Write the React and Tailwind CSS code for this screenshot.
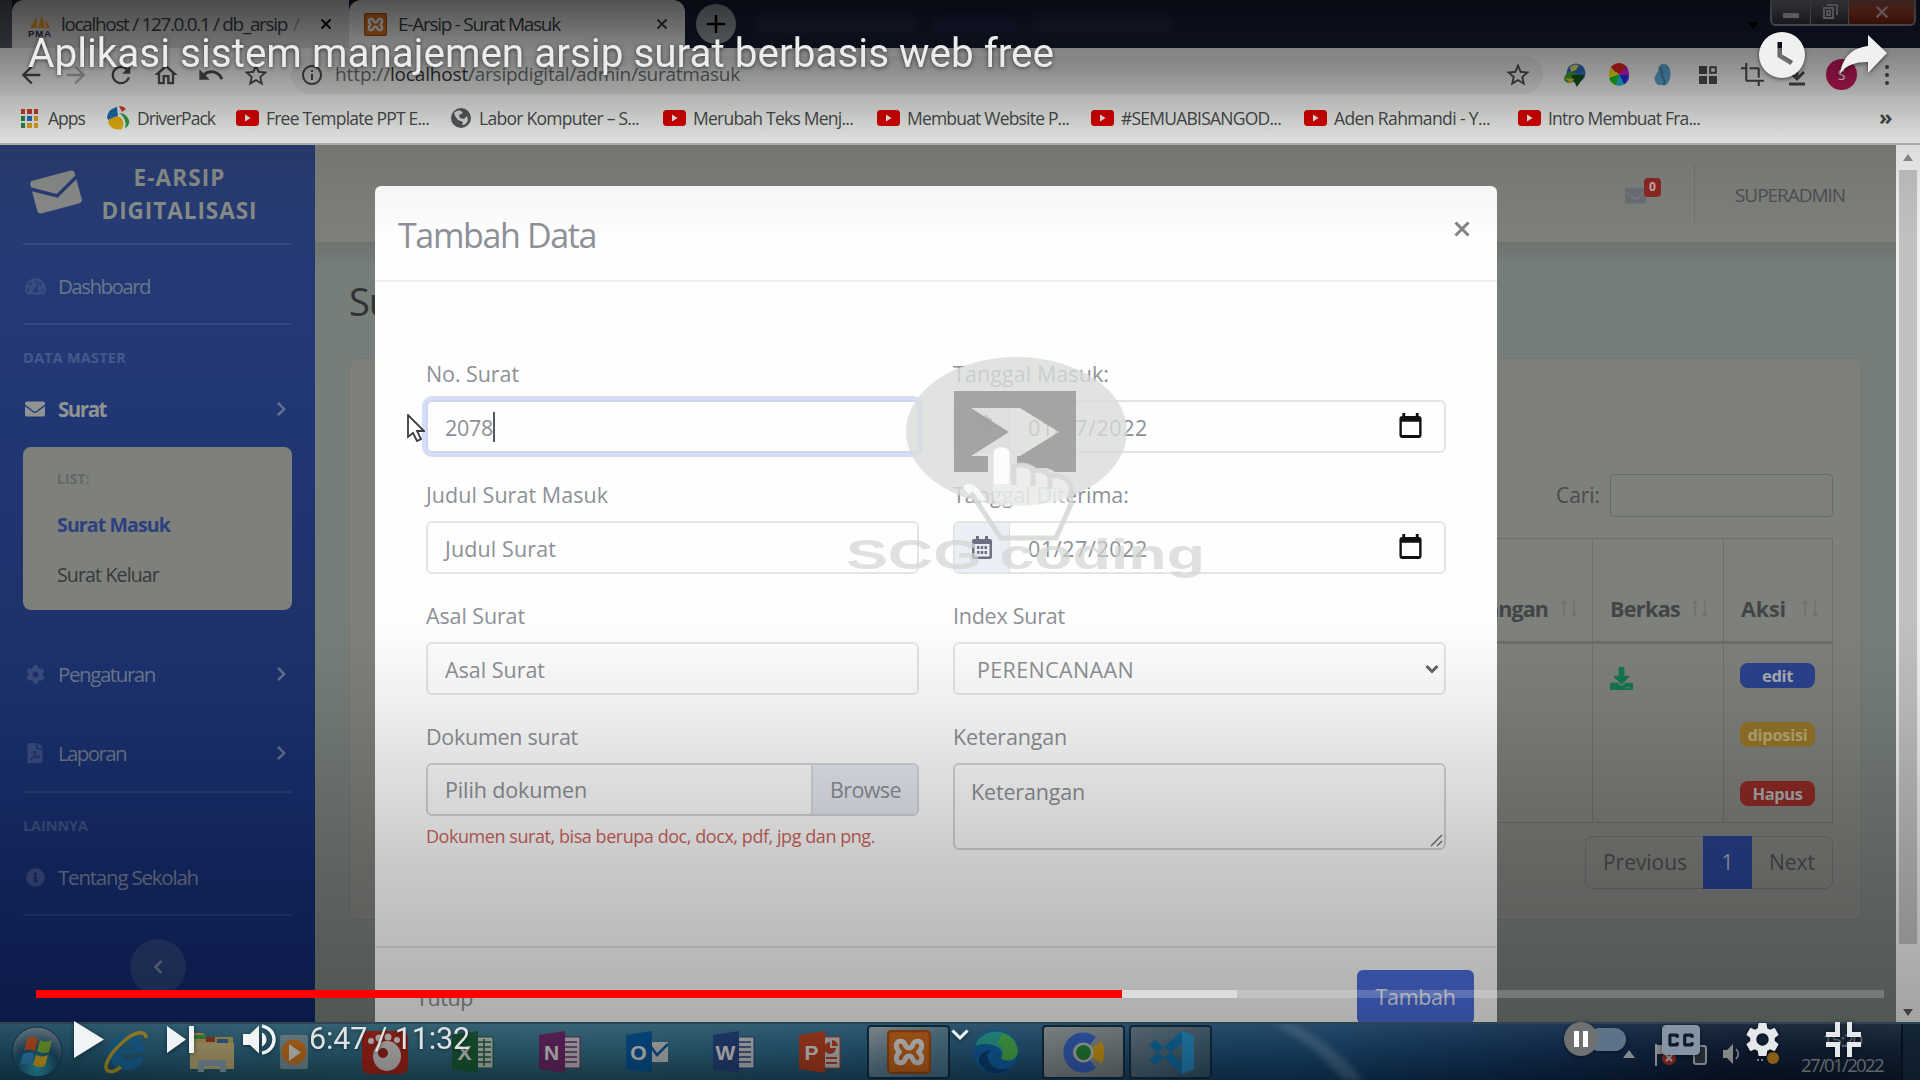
import { useLayoutEffect, useRef } from "react";
import {
  FaTachometerAlt, FaEnvelope, FaCog, FaFilePdf, FaInfoCircle, FaDownload,
  FaChevronRight, FaChevronLeft,
} from "react-icons/fa";
import { MdStarBorder, MdCrop, MdRefresh, MdUndo, MdOutlineHome, MdInfoOutline, MdArrowBack, MdArrowForward, MdSettings } from "react-icons/md";

// Single line of text whose letter spacing is adjusted to fill a given width.
function Fit({ w, className = "", children }) {
  const ref = useRef(null);
  useLayoutEffect(() => {
    const el = ref.current;
    el.style.letterSpacing = "0px";
    const natural = el.getBoundingClientRect().width;
    const n = el.textContent.length;
    el.style.letterSpacing = `${(w - natural) / n}px`;
  }, [w, children]);
  return <span ref={ref} className={`inline-block whitespace-nowrap shrink-0 ${className}`}>{children}</span>;
}

/* ---------- browser ---------- */

function Xampp({ className }) {
  return (
    <svg className={className} viewBox="0 0 24 24" preserveAspectRatio="none">
      <rect width="24" height="24" rx="2.500" fill="#e87722" />
      <rect x=".6" y=".6" width="22.800" height="22.800" rx="2" fill="none" stroke="#b9560f" strokeWidth="1.200" />
      <path d="M8.200 6.200C5 5.500 3.800 9 6.800 12 3.800 15 5 18.500 8.200 17.800c2.200-.5 1.200-3.600 3.800-3.600s1.600 3.100 3.800 3.600c3.200.7 4.400-2.800 1.400-5.800 3-3 1.800-6.500-1.400-5.800-2.200.5-1.200 3.600-3.800 3.600s-1.600-3.100-3.800-3.600z" fill="none" stroke="#fff" strokeWidth="2.700" strokeLinejoin="round" />
    </svg>
  );
}

function Close({ className }) {
  return (
    <svg className={className} viewBox="0 0 12 12"><path d="M1.500 1.500l9 9M10.500 1.500l-9 9" stroke="currentColor" strokeWidth="2" /></svg>
  );
}

function TabStrip() {
  return (
    <div className="flex h-12 bg-[#171f38] text-[#3c3f42] relative">
      <div className="w-3 bg-[#525762]" />
      <div className="w-[337px] bg-[#d6d8d6] rounded-tl-xl flex items-center pl-4">
        <svg className="w-6 h-6 mt-1" viewBox="0 0 24 24">
          <path d="M2 14L9 3v11zM10 14L14 1l3 13zM17 5l5 9h-4z" fill="#f59b23" />
          <text x="0" y="23" fontSize="9.500" fontWeight="bold" fontFamily="Liberation Sans" fill="#2c2c54" textLength="23">PMA</text>
        </svg>
        <div className="w-[236px] ml-[9px] text-[19px] flex"><Fit w={226}>localhost / 127.0.0.1 / db_arsip</Fit><span className="opacity-40 ml-1.5">/</span></div>
        <Close className="w-3 h-3 ml-[23px] text-black" />
      </div>
      <div className="w-[336px] bg-[#f0f2f0] rounded-t-xl flex items-center pl-[15px]">
        <Xampp className="w-[23px] h-[23px]" />
        <div className="ml-[11px] w-[258px] text-[19px]"><Fit w={162}>E-Arsip - Surat Masuk</Fit></div>
        <Close className="w-3 h-3 ml-0" />
      </div>
      <div className="w-10 h-10 mt-1 ml-[11px] rounded-full bg-[#9ba1a6] flex items-center justify-center text-black">
        <svg className="w-[18px] h-[18px]" viewBox="0 0 18 18"><path d="M9 0v18M0 9h18" stroke="currentColor" strokeWidth="2.500" /></svg>
      </div>
      <div className="flex gap-4 ml-5 mt-4 blur-[5px]">
        <div className="w-[160px] h-4 bg-[#262b4a]" /><div className="w-[84px] h-4 bg-[#22284a]" /><div className="w-[140px] h-4 bg-[#262b4a]" />
      </div>
      <svg className="absolute left-[1747px] top-[22px] w-3 h-2" viewBox="0 0 12 8"><path d="M0 0h12L6 7z" fill="#000" /></svg>
      <div className="absolute right-[4px] top-0 h-[26px] w-[146px] flex rounded-b-md border-2 border-t-0 border-[#9a9ca8] overflow-hidden">
        <div className="w-[39px] bg-gradient-to-b from-[#8a8d98] via-[#5d606c] to-[#30343f] flex items-center justify-center border-r border-[#9a9ca8]"><div className="w-4 h-[5px] mt-1.5 bg-[#dcdcdc]" /></div>
        <div className="w-[38px] bg-gradient-to-b from-[#8a8d98] via-[#5d606c] to-[#30343f] flex items-center justify-center border-r border-[#9a9ca8]">
          <svg className="w-4 h-4" viewBox="0 0 16 16"><path d="M5 1h10v10M2 4h9v10H2zM5 7h3v4H5z" fill="none" stroke="#dcdcdc" strokeWidth="1.800" /></svg>
        </div>
        <div className="flex-1 bg-gradient-to-b from-[#a8685c] via-[#b8432c] to-[#7c2012] flex items-center justify-center"><Close className="w-3.5 h-3.5 text-[#f0dcd8]" /></div>
      </div>
    </div>
  );
}

function Toolbar() {
  return (
    <div className="flex items-center h-[47px] pt-1.5 bg-[#f0f1ef] text-[#4a4c4e]">
      <MdArrowBack className="w-7 h-7 ml-[17px]" />
      <MdArrowForward className="w-7 h-7 ml-[17px] opacity-40" />
      <MdRefresh className="w-7 h-7 ml-[17px]" />
      <MdOutlineHome className="w-7 h-7 ml-[17px]" />
      <MdUndo className="w-7 h-7 ml-[17px]" />
      <MdStarBorder className="w-7 h-7 ml-[17px]" />
      <div className="ml-[21px] w-[1252px] h-[38px] rounded-full bg-[#e4e6e3] flex items-center pl-[9px]">
        <MdInfoOutline className="w-6 h-6 shrink-0" />
        <div className="ml-[11px] text-[19px] text-[#676a6d] w-[1169px] shrink-0 flex"><Fit w={55}>http://</Fit><Fit w={78} className="text-[#333]">localhost</Fit><Fit w={272}>/arsipdigital/admin/suratmasuk</Fit></div>
        <MdStarBorder className="w-7 h-7 shrink-0" />
      </div>
      <svg className="w-6 h-6 ml-5" viewBox="0 0 24 24"><circle cx="13" cy="10" r="9.500" fill="#2f6bb5" /><path d="M7 4c3-3 7-3 9-2l-3 5-5 2z" fill="#d9d36a" /><path d="M1 15c2-6 7-8 12-4l-5 9c-4 0-7-1-7-5z" fill="#3e9a35" /><path d="M8 12h14l-8 12z" fill="#164f17" /><path d="M2 15l6 6 3-5z" fill="#d8b92c" /></svg>
      <div className="w-5 h-[23px] ml-[22px] rounded-full bg-[conic-gradient(#e02020_0_12%,#c020d0_12%_27%,#2030e0_27%_42%,#20c0d0_42%_55%,#20c020_55%_70%,#e8e020_70%_86%,#e02020_86%)]" />
      <svg className="w-[22px] h-6 ml-[23px]" viewBox="0 0 24 24"><path d="M12 0c7-1 9 8 8 14s-4 11-9 9c-6 1-9-4-8-9 1-3 4-5 4-8s2-6 5-6z" fill="#5aa3cf" /><path d="M9 4c3 3 1 8 3 11s3 5 0 7" stroke="#3b78a8" strokeWidth="2" fill="none" /></svg>
      <svg className="w-[18px] h-[18px] ml-[25px]" viewBox="0 0 18 18"><path d="M0 0h8v8H0zM0 10h8v8H0zM10 10h8v8h-8z" fill="currentColor" /><path d="M11.200 1.200h5.600v5.600h-5.600z" fill="none" stroke="currentColor" strokeWidth="2" /></svg>
      <MdCrop className="w-[25px] h-[25px] ml-[23px]" />
      <svg className="w-5 h-6 ml-[22px]" viewBox="0 0 20 24"><path d="M10 0v14M3 9l7 7 7-7M2 21h16" fill="none" stroke="currentColor" strokeWidth="2.800" /></svg>
      <div className="w-[31px] h-[31px] ml-[19px] rounded-full bg-[#c2185b] text-white text-sm flex items-center justify-center">S</div>
      <div className="ml-[28px] flex flex-col gap-[4px]"><i className="w-1 h-1 bg-[#4a4c4e] rounded-full" /><i className="w-1 h-1 bg-[#4a4c4e] rounded-full" /><i className="w-1 h-1 bg-[#4a4c4e] rounded-full" /></div>
    </div>
  );
}

function YtIcon() {
  return <svg className="w-[23px] h-4 shrink-0" viewBox="0 0 23 16"><rect width="23" height="16" rx="3.500" fill="#e60000" /><path d="M9 4.500v7l5.500-3.500z" fill="#fff" /></svg>;
}

const videoMarks = [
  ["Merubah Teks Menj...", 160, "w-[214px]"],
  ["Membuat Website P...", 162, "w-[214px]"],
  ["#SEMUABISANGOD...", 160, "w-[213px]"],
  ["Aden Rahmandi - Y...", 156, "w-[214px]"],
  ["Intro Membuat Fra...", 152, "w-[214px]"],
];

function Bookmarks() {
  const dots = ["bg-[#d23b30]", "bg-[#d23b30]", "bg-[#d23b30]", "bg-[#2d8a4a]", "bg-[#2b70c9]", "bg-[#e4a620]", "bg-[#2d8a4a]", "bg-[#e4a620]", "bg-[#e4a620]"];
  return (
    <div className="flex items-center h-[50px] pb-[2px] bg-[#f4f6f3] text-[17.5px] text-[#4c4e50] border-b-2 border-[#b8bab7]">
      <div className="w-[85px] pl-[21px] flex items-center">
        <div className="grid grid-cols-3 gap-[2px] w-[19px]">{dots.map((d, i) => <i key={i} className={`h-[5px] ${d}`} />)}</div>
        <div className="ml-[10px]"><Fit w={37}>Apps</Fit></div>
      </div>
      <div className="w-[130px] pl-[21px] flex items-center">
        <svg className="w-[24px] h-[24px]" viewBox="0 0 24 24"><path d="M1 11C2 5 6 2 11 1l1 9-10 4z" fill="#1b6fb5" /><path d="M13 0c3 0 5 1 7 3l-4 3z" fill="#d83b2e" /><path d="M13 7c5 0 8 3 10 7 1 4-2 8-4 8 2-6-1-12-6-15z" fill="#34a14b" /><path d="M2 15c4-4 10-6 13-3s3 7 1 11C10 25 3 22 2 15z" fill="#eab511" /></svg>
        <div className="ml-[7px]"><Fit w={78}>DriverPack</Fit></div>
      </div>
      <div className="w-[215px] pl-[21px] flex items-center"><YtIcon /><div className="ml-[7px]"><Fit w={163}>Free Template PPT E...</Fit></div></div>
      <div className="w-[212px] pl-[21px] flex items-center">
        <svg className="w-5 h-5" viewBox="0 0 20 20"><circle cx="10" cy="10" r="10" fill="#5a5d60" /><path d="M3 5c2-2 4-3 7-2l2 2-4 2 1 3 4 1 3-3 1 4c-1 3-3 5-6 5l1-3-5-2-3-4z" fill="#e8e8e6" /></svg>
        <div className="ml-2"><Fit w={160}>Labor Komputer – S...</Fit></div>
      </div>
      {videoMarks.map(([t, w, c]) => (
        <div key={t} className={`${c} pl-[21px] flex items-center`}><YtIcon /><div className="ml-[7px]"><Fit w={w}>{t}</Fit></div></div>
      ))}
      <div className="ml-[168px] text-[22px] font-bold pb-1">»</div>
    </div>
  );
}

/* ---------- application page ---------- */

function Divider({ className }) {
  return <div className={`h-0.5 mx-[23px] bg-white/[0.07] ${className}`} />;
}

function NavItem({ icon, label, w, arrow, strong, className }) {
  return (
    <div className={`flex items-center h-8 pl-6 text-[20.5px] ${strong ? "text-[#8f9492] font-bold" : "text-[#6c768d]"} ${className}`}>
      <div className={`w-[22px] flex justify-center ${strong ? "" : "text-[#3a4b80]"}`}>{icon}</div>
      <div className="ml-[12px] w-[218px]"><Fit w={w}>{label}</Fit></div>
      {arrow && <FaChevronRight className="w-[11px] h-4 text-[#63708f]" />}
    </div>
  );
}

function Sidebar() {
  return (
    <aside className="w-[315px] shrink-0 h-full overflow-hidden bg-[linear-gradient(#2a3d72_0,#263b74_80px,#213775_260px,#1e336c_460px,#192f70_650px,#102568_880px)]">
      <div className="flex h-[98px] pt-[16px] pl-[30px]">
        <svg className="w-[52px] h-[46px] mt-2" viewBox="0 0 52 46" fill="#868986">
          <g transform="rotate(-15 26 23)"><path d="M3 10a4 4 0 0 1 4-4h38a4 4 0 0 1 4 4v2L26 25 3 12z" /><path d="M3 16l23 13 23-13v20a4 4 0 0 1-4 4H7a4 4 0 0 1-4-4z" /></g>
        </svg>
        <div className="ml-[20px] w-[155px] flex flex-col items-center text-[22.5px] leading-[33px] font-bold text-[#888c88]">
          <Fit w={92}>E-ARSIP</Fit><Fit w={156}>DIGITALISASI</Fit>
        </div>
      </div>
      <Divider />
      <NavItem className="mt-[25px]" icon={<FaTachometerAlt size={21} />} label="Dashboard" w={92} />
      <Divider className="mt-[21px]" />
      <div className="mt-[23px] h-5 leading-5 pl-[23px] text-[14.5px] font-bold text-[#46588a]"><Fit w={103}>DATA MASTER</Fit></div>
      <NavItem className="mt-[25px]" icon={<FaEnvelope size={20} />} label="Surat" w={48} strong arrow />
      <div className="mt-[22px] mx-[23px] h-[163px] rounded-lg bg-[#7e807c] pl-[34px] pt-[22px]">
        <div className="h-5 leading-5 text-[13.5px] font-bold text-[#63666a]"><Fit w={33}>LIST:</Fit></div>
        <div className="h-6 leading-6 mt-[24px] text-[19.5px] font-bold text-[#2c3f80]"><Fit w={113}>Surat Masuk</Fit></div>
        <div className="h-6 leading-6 mt-[26px] text-[19.5px] text-[#37393d]"><Fit w={102}>Surat Keluar</Fit></div>
      </div>
      <NavItem className="mt-[48px]" icon={<FaCog size={19} />} label="Pengaturan" w={97} arrow />
      <NavItem className="mt-[47px]" icon={<FaFilePdf size={20} />} label="Laporan" w={68} arrow />
      <Divider className="mt-[22px]" />
      <div className="mt-[23px] h-5 leading-5 pl-[23px] text-[14.5px] font-bold text-[#3e5082]"><Fit w={65}>LAINNYA</Fit></div>
      <NavItem className="mt-[25px]" icon={<FaInfoCircle size={19} />} label="Tentang Sekolah" w={140} />
      <Divider className="mt-[21px]" />
      <div className="mt-[23px] mx-auto w-14 h-14 rounded-full bg-[#273c72] flex items-center justify-center text-[#6f7a92]"><FaChevronLeft className="w-3 h-4" /></div>
    </aside>
  );
}

function SortArrows() {
  return <svg className="w-[18px] h-[17px] mb-2" viewBox="0 0 18 17" fill="none" stroke="#6b6e6d" strokeWidth="1.200"><path d="M4 16V1M1.500 3.500L4 1l2.500 2.500M14 1v15M11.500 13.500L14 16l2.500-2.500" /></svg>;
}

function MainPage() {
  return (
    <main className="flex-1 overflow-hidden bg-[#767e79] flex flex-col">
      <div className="h-[97px] shrink-0 bg-[#7d7f7b] flex items-center justify-end">
        <div className="relative w-[23px] h-[18px] text-[#6b6d76]"><FaEnvelope className="w-[23px] h-[21px]" />
          <div className="absolute -top-[7px] left-[20px] w-[17px] h-[19px] rounded bg-[#8c2722] text-[#c9a9a5] text-[12px] font-bold flex items-center justify-center">0</div>
        </div>
        <div className="ml-[47px] w-px h-[58px] bg-[#6e716f]" />
        <div className="ml-[40px] mr-[51px] text-[19px] text-[#4c4e54] pt-1"><Fit w={110}>SUPERADMIN</Fit></div>
      </div>
      <div className="h-6 shrink-0 bg-gradient-to-b from-[#6d736f] to-[#767e79]" />
      <h1 className="h-[52px] leading-[52px] mt-[9px] pl-[34px] text-[38px] text-[#303234]"><Fit w={208}>Surat Masuk</Fit></h1>
      <section className="mt-[31px] mx-[34px] h-[562px] rounded-lg border border-[#737674] bg-[#7e807c] flex flex-col items-end pr-[28px] text-[21px] text-[#484b4e]">
        <div className="mt-[115px] flex items-center"><Fit w={44}>Cari:</Fit><div className="ml-[10px] w-[223px] h-[43px] rounded border border-[#686b6b]" /></div>
        <div className="mt-[21px] w-[1420px] h-[285px] border border-[#6b6e6d] grid grid-cols-[1179px_131px_1fr] grid-rows-[105px_1fr] [&>*]:border-[#6b6e6d] font-bold text-[#424548] text-[21.5px]">
          <div className="border-r border-b-[3px] flex items-end justify-end pb-[16px] pr-[14px]"><Fit w={116}>Keterangan</Fit><span className="ml-[12px]"><SortArrows /></span></div>
          <div className="border-r border-b-[3px] flex items-end pb-[16px] pl-[17px]"><Fit w={70}>Berkas</Fit><span className="ml-[11px]"><SortArrows /></span></div>
          <div className="border-b-[3px] flex items-end pb-[16px] pl-[17px]"><Fit w={45}>Aksi</Fit><span className="ml-[15px]"><SortArrows /></span></div>
          <div className="border-r" />
          <div className="border-r pl-[17px] pt-[23px] text-[#13764e]"><FaDownload size={23} /></div>
          <div className="pl-[16px] pt-[19px] flex flex-col gap-[34px] text-[16.5px] text-[#a9adb0]">
            <div className="w-[75px] h-[25px] leading-[26px] rounded-lg bg-[#2a428d] text-center"><Fit w={31}>edit</Fit></div>
            <div className="w-[75px] h-[25px] leading-[26px] rounded-lg bg-[#957428] text-center text-[#b7a878]"><Fit w={60}>diposisi</Fit></div>
            <div className="w-[75px] h-[25px] leading-[26px] rounded-lg bg-[#8f2a24] text-center"><Fit w={50}>Hapus</Fit></div>
          </div>
        </div>
        <div className="mt-[13px] h-[53px] w-[248px] rounded-lg border border-[#6b6e6d] flex items-center">
          <div className="w-[117px] pl-[17px]"><Fit w={84}>Previous</Fit></div>
          <div className="w-[49px] h-[53px] bg-[#27408d] flex items-center justify-center text-[#9ba3b5]">1</div>
          <div className="flex-1 pl-[17px]"><Fit w={46}>Next</Fit></div>
        </div>
      </section>
    </main>
  );
}

const inputBox = "h-[53px] rounded-md border-2 border-[#e2e5e8] flex items-center text-[21.5px] pl-[17px] pt-[3px]";

function Field({ label, w, children }) {
  return (
    <div className="flex flex-col">
      <div className="h-8 leading-8 mb-[10px] text-[21.5px] text-[#8d9096]"><Fit w={w}>{label}</Fit></div>
      {children}
      <div className="h-[26px]" />
    </div>
  );
}

function DateInput() {
  return (
    <div className="h-[53px] rounded-md border-2 border-[#e2e5e8] flex items-center text-[21.5px] text-[#8d9096] overflow-hidden">
      <div className="w-[55px] h-full bg-[#eceef6] border-r border-[#dcdfe6] flex items-center justify-center">
        <svg className="w-5 h-[23px]" viewBox="0 0 20 23"><path d="M4 0h3v3h6V0h3v3h2a2 2 0 0 1 2 2v16a2 2 0 0 1-2 2H2a2 2 0 0 1-2-2V5a2 2 0 0 1 2-2h2z" fill="#6e7082" /><path d="M2.500 8h15v12.500h-15z" fill="#eceef6" /><path d="M5 11.500h10M5 16.500h10" stroke="#6e7082" strokeWidth="3" strokeDasharray="2.500 1.250" /></svg>
      </div>
      <div className="ml-[18px] w-[371px] pt-[3px]"><Fit w={120}>01/27/2022</Fit></div>
      <svg className="w-[23px] h-[25px] mb-0.5" viewBox="0 0 23 26"><path d="M3 0h3v3h11V0h3v3a3 3 0 0 1 3 3v17a3 3 0 0 1-3 3H3a3 3 0 0 1-3-3V6a3 3 0 0 1 3-3z" fill="#111" /><path d="M2.500 9h18v14h-18z" fill="#fff" /></svg>
    </div>
  );
}

function Modal() {
  return (
    <div className="absolute left-[375px] top-[41px] w-[1122px] h-[900px] rounded-md bg-[#fdfefd] text-[#8d9096]">
      <div className="h-[96px] border-b-2 border-[#eceeef] flex items-center justify-between pl-[23px] pr-[27px]">
        <div className="text-[34px] pt-1"><Fit w={198}>Tambah Data</Fit></div>
        <svg className="w-4 h-4 mb-2" viewBox="0 0 16 16"><path d="M1.500 1.500l13 13M14.500 1.500l-13 13" stroke="#818481" strokeWidth="3" /></svg>
      </div>
      <div className="h-[664px] pt-[76px] pl-[51px] pr-[51px] grid grid-cols-[493px_493px] gap-x-[34px] content-start">
        <Field label="No. Surat" w={93}>
          <div className="h-[53px] rounded-md border-2 border-[#ccd6f4] ring-4 ring-[#d6def7] flex items-center text-[21.5px] pl-[17px]"><span className="pt-[4px]"><Fit w={48}>2078</Fit></span><div className="w-0.5 h-[30px] bg-[#55585c]" /></div>
        </Field>
        <Field label="Tanggal Masuk:" w={156}><DateInput /></Field>
        <Field label="Judul Surat Masuk" w={182}><div className={inputBox}><Fit w={111}>Judul Surat</Fit></div></Field>
        <Field label="Tanggal Diterima:" w={176}><DateInput /></Field>
        <Field label="Asal Surat" w={99}><div className={inputBox}><Fit w={100}>Asal Surat</Fit></div></Field>
        <Field label="Index Surat" w={112}>
          <div className="h-[53px] rounded-md border-2 border-[#e2e5e8] flex items-center justify-between text-[21.5px] pl-[22px] pr-[5px]"><span className="pt-[3px]"><Fit w={157}>PERENCANAAN</Fit></span>
            <svg className="w-3.5 h-3" viewBox="0 0 14 12"><path d="M1.500 3L7 8.500 12.500 3" fill="none" stroke="#606265" strokeWidth="3" /></svg>
          </div>
        </Field>
        <Field label="Dokumen surat" w={152}>
          <div className="h-[53px] rounded-md border-2 border-[#d3d6dd] flex items-center text-[21.5px] pl-[17px] overflow-hidden">
            <div className="w-[366px] pt-0.5"><Fit w={142}>Pilih dokumen</Fit></div>
            <div className="flex-1 h-full bg-[#e8eaf2] border-l-2 border-[#d8dbe3] pl-[17px] pt-0.5 flex items-center"><Fit w={71}>Browse</Fit></div>
          </div>
          <div className="h-7 leading-7 mt-[6px] text-[18px] text-[#cf6560]"><Fit w={449}>Dokumen surat, bisa berupa doc, docx, pdf, jpg dan png.</Fit></div>
        </Field>
        <Field label="Keterangan" w={114}>
          <div className="h-[87px] rounded-md border-2 border-[#d3d6dd] pl-[16px] pt-[11px] text-[21.5px] flex justify-between"><Fit w={114}>Keterangan</Fit>
            <svg className="w-[15px] h-[15px] self-end" viewBox="0 0 15 15"><path d="M2 13L13 2M8 13l5-5" stroke="#777" strokeWidth="1.500" /></svg>
          </div>
        </Field>
      </div>
      <div className="h-24 border-t-2 border-[#e4e6e6] flex justify-between pl-[41px] pr-[23px] pt-[22px] text-[21.5px]">
        <div className="h-[56px] flex items-center"><Fit w={57}>Tutup</Fit></div>
        <div className="w-[117px] h-[54px] rounded-md bg-[#4c6fe0] text-[#e6ebfb] flex items-center justify-center"><Fit w={80}>Tambah</Fit></div>
      </div>
    </div>
  );
}

function Scrollbar() {
  return (
    <div className="w-6 bg-[#eef0ed] flex flex-col items-center">
      <svg className="w-2.5 h-2 mt-[9px]" viewBox="0 0 10 8"><path d="M0 7h10L5 0z" fill="#8a8c89" /></svg>
      <div className="mt-[8px] w-[18px] h-[774px] bg-[#bfc1be]" />
      <svg className="w-2.5 h-2 mt-[64px]" viewBox="0 0 10 8"><path d="M0 1h10L5 8z" fill="#5b5d5b" /></svg>
    </div>
  );
}

/* ---------- watermark ---------- */

function Watermark() {
  return (
    <svg className="absolute left-[840px] top-[350px] w-[380px] h-[240px]" viewBox="840 350 380 240">
      <ellipse cx="1016.500" cy="431.500" rx="110.500" ry="74.500" fill="#dadcda" fillOpacity=".8" />
      <path d="M954 391h122v81h-21c-5-4-12-5-18-3-4-5-12-6-20-5v-8h3l39-24-39-24h-49l38 24-38 24h17v16h-34z" fill="#a0a0a0" fillOpacity=".95" />
      <path d="M993 500V453c0-8 17-8 17 0v31l7-18c8-3 16 0 18 4 8-2 14 0 17 5 10-1 20 3 19 15l-6 17h-66z" fill="#fdfefd" fillOpacity=".4" />
      <path d="M994 484V452c0-6 15-6 15 0v32z" fill="#fdfefd" fillOpacity=".9" />
      <path d="M963 488c2-7 12-4 17 3l6 9-10 2z" fill="#fdfefd" fillOpacity=".8" />
      <path d="M1014 485V466c7-2 19-1 19 7v13M1033 471c8-2 17 1 17 8v10M1050 476c9-1 20 2 21 12v16l-15 34h-55l-30-45" fill="none" stroke="#d5d7d5" strokeWidth="5" strokeOpacity=".85" />
      <text x="846" y="569" fontFamily="Liberation Sans" fontWeight="bold" fontSize="42" fill="#d2d4d2" fillOpacity=".7" textLength="359" lengthAdjust="spacingAndGlyphs">SCG coding</text>
    </svg>
  );
}

/* ---------- taskbar ---------- */

function OfficeIcon({ letter, color, kind, className }) {
  return (
    <svg className={`w-[42px] h-[42px] shrink-0 ${className}`} viewBox="0 0 42 42">
      {kind !== "mail" && <rect x="23" y="6" width="18" height="31" fill="#e2e4e6" stroke={color} />}
      {kind === "grid" && <path d="M26 11h13M26 16h13M26 21h13M26 26h13M26 31h13M32 8v27" stroke={color} strokeWidth="1.500" />}
      {kind === "lines" && <path d="M26 11h12M26 16h12M26 21h12M26 26h12M26 31h12" stroke={color} strokeWidth="1.700" />}
      {kind === "mail" && <><path d="M24 11h18v20H24z" fill="#e2e4e6" /><path d="M25 16l6 8 11-11" stroke={color} strokeWidth="2.500" fill="none" /></>}
      {kind === "pie" && <><path d="M31 11a6 6 0 1 0 6 6h-6zM33 9v6h6a6 6 0 0 0-6-6z" fill={color} /><path d="M27 27h11M27 32h11" stroke={color} strokeWidth="2" /></>}
      <path d="M0 4L26 0v42L0 38z" fill={color} />
      <text x="12.500" y="29" textAnchor="middle" fontFamily="Liberation Sans" fontWeight="bold" fontSize="21" fill="#fff">{letter}</text>
    </svg>
  );
}

function Taskbar() {
  return (
    <div className="relative h-[58px] shrink-0 flex items-center overflow-hidden border-t-2 border-[#41637a] bg-[linear-gradient(90deg,#22678a_0,#327d9c_13%,#38839f_30%,#2b729c_45%,#236192_58%,#1a568e_70%,#12386a_82%,#0e2444_90%,#122a48_100%)]">
      <div className="absolute inset-0 bg-[linear-gradient(#ffffff20_0,#ffffff08_45%,#00000030_100%)]" />
      <svg className="absolute left-[1250px] top-0 w-[150px] h-[57px]" viewBox="0 0 150 57"><path d="M22 0h22c30 15 52 35 70 57H95C75 35 55 15 22 0z" fill="#a9c8e0" opacity=".35" filter="blur(3px)" /></svg>
      <div className="relative flex items-center h-full w-full">
        <svg className="w-[52px] h-[52px] ml-[11px] shrink-0" viewBox="0 0 52 52">
          <defs><radialGradient id="orb" cx=".5" cy=".85" r=".9"><stop offset="0" stopColor="#35c3de" /><stop offset=".5" stopColor="#1f5f82" /><stop offset="1" stopColor="#a6b6c0" /></radialGradient></defs>
          <circle cx="26" cy="26" r="25" fill="url(#orb)" stroke="#174860" />
          <path d="M16 13c4-3 8-2 11 0l-3 12c-4-2-8-2-11 0z" fill="#e8622c" /><path d="M29 14c4 2 8 2 12 0l-3 12c-4 2-8 1-12-1z" fill="#8cc63f" /><path d="M12 28c4-2 8-2 11 0l-3 11c-4-2-7-2-11 0z" fill="#3a9fe0" /><path d="M25 29c4 2 8 2 12 0l-3 11c-4 2-8 1-12-1z" fill="#f8c52c" />
        </svg>
        <svg className="w-[48px] h-[46px] ml-[39px] shrink-0" viewBox="0 0 48 46">
          <path d="M25 6c11 0 18 8 18 18H19c1 5 4 7 8 7 3 0 6-1 8-3h8c-3 8-10 13-18 13-11 0-18-7-18-17S14 6 25 6zm0 8c-4 0-7 3-7 6h15c-1-4-4-6-8-6z" fill="#1f7fc0" /><path d="M44 9c0-8-11-7-22 3C8 24 0 38 6 42c4 2 9-1 13-4" stroke="#d8b830" strokeWidth="3.500" fill="none" />
        </svg>
        <svg className="w-[46px] h-[42px] ml-[39px] shrink-0" viewBox="0 0 46 42"><path d="M2 2h12l3 4h27v30H2z" fill="#d9c068" /><path d="M5 4h12v4H5z" fill="#4caf50" /><path d="M17 6h9v5h-9z" fill="#b9442c" /><path d="M28 8h11v5H28z" fill="#3b78b8" /><path d="M1 12h44v26H1z" fill="#dfcd8c" /><path d="M9 41V29h28v12h-6v-6H15v6z" fill="#9fbfd2" /></svg>
        <svg className="w-[32px] h-[34px] ml-[45px] shrink-0" viewBox="0 0 32 34"><rect width="28" height="34" rx="2" fill="#b9c4cc" opacity=".7" /><circle cx="14" cy="17" r="12.500" fill="#f08a24" /><path d="M9 9v17l12-8.500z" fill="#fff" /></svg>
        <svg className="w-[46px] h-[43px] ml-[50px] shrink-0" viewBox="0 0 46 43"><rect width="46" height="43" rx="7" fill="#c92c20" /><ellipse cx="25" cy="25" rx="14" ry="15" fill="#f0eeec" /><circle cx="21" cy="22" r="5" fill="#b02a20" /><circle cx="9" cy="10" r="3" fill="#fff" /><circle cx="17" cy="7" r="3.500" fill="#fff" /><circle cx="26" cy="6" r="3.500" fill="#fff" /><circle cx="35" cy="9" r="3" fill="#fff" /></svg>
        <OfficeIcon className="ml-[44px]" letter="X" color="#1e7042" kind="grid" />
        <OfficeIcon className="ml-[45px]" letter="N" color="#80307c" kind="lines" />
        <OfficeIcon className="ml-[45px]" letter="O" color="#0a66b4" kind="mail" />
        <OfficeIcon className="ml-[45px]" letter="W" color="#2c4f94" kind="lines" />
        <OfficeIcon className="ml-[44px]" letter="P" color="#d24a26" kind="pie" />
        <div className="ml-[26px] w-[83px] h-[54px] shrink-0 rounded border-2 border-[#16384e] bg-gradient-to-br from-[#b6c6cf] via-[#6c99b0] to-[#4f86a6] flex items-center justify-center"><Xampp className="w-[44px] h-[44px]" /></div>
        <svg className="w-[46px] h-[44px] ml-[23px] shrink-0" viewBox="0 0 46 44"><circle cx="23" cy="22" r="22" fill="#1473c4" /><path d="M2 16C8-4 42-4 45 20c1 10-12 12-17 8 6-10-12-18-26-12z" fill="#31bdb0" /><path d="M30 3c14 6 18 20 11 26-5 3-12 1-13-1 5-8 0-14-4-15z" fill="#58cf5a" /><path d="M14 24c0 10 10 20 24 13C28 48 10 44 6 32c-1-8 6-12 12-12z" fill="#0d4a8c" /></svg>
        <div className="ml-[23px] w-[83px] h-[54px] shrink-0 rounded border-2 border-[#16384e] bg-gradient-to-br from-[#b4bec2] to-[#87959c] flex items-center justify-center">
          <svg className="w-[41px] h-[41px]" viewBox="0 0 41 41"><path d="M33 5A20 20 0 1 0 33 36L26 27A9.500 9.500 0 1 1 26 14z" fill="#4072e0" /><path d="M24 19L39 9c3 7 3 16 0 23L24 22z" fill="#f0b81e" /><circle cx="20.500" cy="20.500" r="10" fill="#d5dcdf" /><circle cx="20.500" cy="20.500" r="7.500" fill="#2a9a42" /></svg>
        </div>
        <div className="ml-[4px] w-[83px] h-[54px] shrink-0 rounded border-2 border-[#16384e] bg-gradient-to-br from-[#7e96a4] to-[#3b6480] flex items-center justify-center">
          <svg className="w-[46px] h-[43px]" viewBox="0 0 46 43"><path d="M34 0l12 5v33l-12 5z" fill="#2aa3e6" /><path d="M34 0v12L7 34l-6-5zM34 43V31L7 9l-6 5z" fill="#1583c6" /></svg>
        </div>
        <div className="ml-[411px] flex items-center gap-4 pt-1 shrink-0">
          <svg className="w-3 h-2" viewBox="0 0 12 8"><path d="M0 8h12L6 0z" fill="#dfe5ea" /></svg>
          <svg className="w-[22px] h-6 ml-1" viewBox="0 0 22 24"><path d="M1 2v22" stroke="#e8e8e8" strokeWidth="2" /><path d="M2 3h11v9H2z" fill="#d8dcdf" /><circle cx="14" cy="16" r="7" fill="#d03a2c" /><path d="M11 13l6 6M17 13l-6 6" stroke="#fff" strokeWidth="2" /></svg>
          <svg className="w-3.5 h-[22px]" viewBox="0 0 14 22"><rect x="1" y="3" width="12" height="18" rx="2" fill="#3d4a52" stroke="#dde" strokeWidth="2" /></svg>
          <svg className="w-[18px] h-5" viewBox="0 0 18 20"><path d="M0 6h4l6-6v20l-6-6H0z" fill="#dde1e4" /><path d="M13 5c3 3 3 7 0 10" stroke="#dde1e4" fill="none" strokeWidth="1.500" /></svg>
          <svg className="w-[22px] h-6" viewBox="0 0 22 24"><path d="M0 18h8" stroke="#dde" strokeWidth="2" strokeDasharray="2 2" /><circle cx="16" cy="16" r="6" fill="#eaa426" /></svg>
        </div>
        <div className="ml-[22px] w-[82px] shrink-0 flex flex-col items-center text-[18.5px] leading-[25px] text-[#a9b3bd]"><Fit w={39}>15:20</Fit><Fit w={82}>27/01/2022</Fit></div>
        <div className="ml-auto w-[19px] h-full shrink-0 border-l-2 border-[#0a1a30] bg-[#1c3650]" />
      </div>
    </div>
  );
}

/* ---------- video player controls ---------- */

function Player() {
  return (
    <div className="absolute inset-0 flex flex-col text-[#ececec] font-[Roboto,sans-serif]">
      <div className="flex items-start pl-[28px] pr-[33px] pt-[27px] drop-shadow-[0_1px_2px_rgba(0,0,0,0.6)]">
        <div className="text-[40.5px] leading-[53px]"><Fit w={1026}>Aplikasi sistem manajemen arsip surat berbasis web free</Fit></div>
        <svg className="w-[46px] h-[46px] ml-auto mt-[5px]" viewBox="0 0 46 46"><path fillRule="evenodd" d="M23 0a23 23 0 1 1 0 46a23 23 0 1 1 0-46zM18.500 10v15l13 8 2.500-4-11-6.500V10z" fill="#f0f0f0" /></svg>
        <svg className="w-[47px] h-[40px] ml-[35px] mt-[8px]" viewBox="0 0 47 40"><path d="M28 0l19 18-19 20V27C15 27 6 30 0 39 2 25 10 13 28 11z" fill="#f0f0f0" /></svg>
      </div>
      <div className="mt-auto mx-[36px] h-2 flex mb-[10px]">
        <div className="w-[1085.500px] bg-[#ff0000]" /><div className="w-[115px] bg-[#dcdcdc]" /><div className="flex-1 bg-white/20" />
      </div>
      <div className="h-[72px] flex items-start pl-[74px] pr-[59px] drop-shadow-[0_1px_2px_rgba(0,0,0,0.5)]">
        <svg className="w-[30px] h-[37px] mt-[13px]" viewBox="0 0 30 37"><path d="M0 0l30 18.500L0 37z" fill="#f0f4f6" /></svg>
        <svg className="w-[27px] h-[27px] mt-[18px] ml-[63px]" viewBox="0 0 27 27"><path d="M0 0l19 13.500L0 27zM22 0h5v27h-5z" fill="#f0f4f6" /></svg>
        <svg className="w-[33px] h-[31px] mt-[16px] ml-[49px]" viewBox="0 0 33 31"><path d="M0 10h7l9-8.500v28L7 21H0zM19 8.500c6 2.500 6 11.500 0 14z" fill="#f0f4f6" /><path d="M19 1.800c16 3.500 16 24 0 27.400" stroke="#f0f4f6" strokeWidth="3.400" fill="none" /></svg>
        <div className="ml-[33px] mt-[13px] h-[36px] leading-[36px] text-[30.5px] text-[#dfe2e4]"><Fit w={161}>6:47 / 11:32</Fit></div>
        <svg className="w-[18px] h-[12px] mt-[21px] ml-[481px]" viewBox="0 0 18 12"><path d="M1.500 1.500L9 9l7.500-7.500" fill="none" stroke="#fff" strokeWidth="3" /></svg>
        <div className="relative ml-auto mt-[14px] w-[62px] h-[34px] flex items-center">
          <div className="ml-6 w-[38px] h-[23px] rounded-full bg-[#5d7387]" />
          <div className="absolute left-0 top-0 w-[34px] h-[34px] rounded-full bg-[#6f7072] flex items-center justify-center gap-[4px]"><i className="w-[5px] h-[16px] bg-white" /><i className="w-[5px] h-[16px] bg-white" /></div>
        </div>
        <svg className="w-[38px] h-[30px] mt-[17px] ml-[36px]" viewBox="3 5 18 14" preserveAspectRatio="none"><path fillRule="evenodd" d="M19 5H5c-1.110 0-2 .9-2 2v10c0 1.100.89 2 2 2h14c1.100 0 2-.9 2-2V7c0-1.100-.9-2-2-2zm-8 6H9.500v-.5h-2v3h2V13H11v1c0 .55-.45 1-1 1H7c-.55 0-1-.45-1-1v-4c0-.55.45-1 1-1h3c.55 0 1 .45 1 1v1zm7 0h-1.500v-.5h-2v3h2V13H18v1c0 .55-.45 1-1 1h-3c-.55 0-1-.45-1-1v-4c0-.55.45-1 1-1h3c.55 0 1 .45 1 1v1z" fill="#8494a5" /></svg>
        <MdSettings className="w-[41px] h-[41px] mt-[11px] ml-[42px] text-[#e6e9ec]" />
        <svg className="w-[35px] h-[35px] mt-[14px] ml-[43px]" viewBox="0 0 35 35"><path d="M0 10h9V0h5v15H0zM35 10h-9V0h-5v15h14zM0 25h9v10h5V20H0zM35 25h-9v10h-5V20h14z" fill="#e6e9ec" /></svg>
      </div>
    </div>
  );
}

export default function App() {
  return (
    <div className="relative w-[1920px] h-[1080px] overflow-hidden bg-black font-['Open_Sans','Noto_Sans',sans-serif]">
      <div className="h-full flex flex-col">
        <TabStrip />
        <Toolbar />
        <Bookmarks />
        <div className="relative h-[877px] shrink-0 flex overflow-hidden">
          <Sidebar />
          <MainPage />
          <Scrollbar />
          <Modal />
        </div>
        <Taskbar />
      </div>
      <Watermark />
      <svg className="absolute left-[407px] top-[414px] w-[18px] h-[28px]" viewBox="0 0 18 28"><path d="M1 1v22l5-4 4 8 4-2-4-8h7z" fill="#fff" stroke="#3c3e40" strokeWidth="1.800" /></svg>
      <div className="absolute inset-x-0 top-0 h-[240px] bg-[linear-gradient(#000000a8_0,#00000078_45px,#0000005c_75px,#00000044_96px,#00000014_145px,#00000008_190px,#00000000_240px)]" />
      <div className="absolute inset-x-0 bottom-0 h-[460px] bg-[linear-gradient(#00000000_0,#0000000e_80px,#00000026_180px,#00000036_250px,#00000044_330px,#00000050_400px,#00000078_460px)]" />
      <Player />
    </div>
  );
}
